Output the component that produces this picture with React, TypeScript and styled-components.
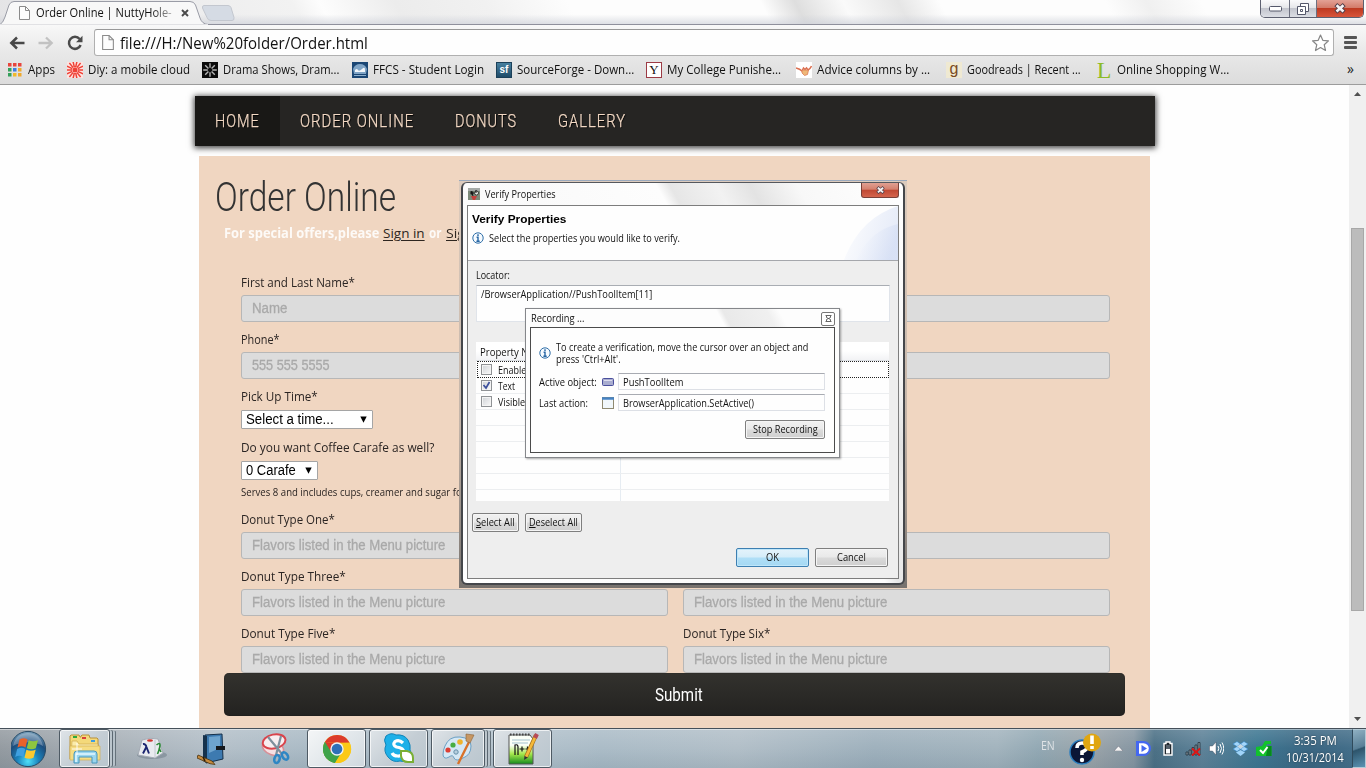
import React, { useLayoutEffect, useRef, useState } from "react";
import styled, { createGlobalStyle, css } from "styled-components";

const UI = `"Open Sans", "Noto Sans", sans-serif`;
const HEAD = `Roboto, "Open Sans", sans-serif`;

const Global = createGlobalStyle`
  * { box-sizing: border-box; }
  html, body { margin: 0; padding: 0; overflow: hidden; background: #fefefe; }
  svg { display: block; flex: none; }
`;

/* ---------- text fitted to a fixed advance width ---------- */
const FitBox = styled.span<{ $w: number }>`
  display: inline-block;
  width: ${(p) => p.$w}px;
  flex: none;
  white-space: pre;
  text-align: left;
  text-decoration: inherit;
`;
const FitInner = styled.span`
  display: inline-block;
  transform-origin: 0 50%;
  text-decoration: inherit;
`;
function Fit({ w, children }: { w: number; children: React.ReactNode }) {
  const ref = useRef<HTMLSpanElement>(null);
  const [scale, setScale] = useState(1);
  useLayoutEffect(() => {
    if (ref.current) setScale(w / ref.current.offsetWidth);
  }, [w]);
  return (
    <FitBox $w={w}>
      <FitInner ref={ref} style={{ transform: `scaleX(${scale})` }}>
        {children}
      </FitInner>
    </FitBox>
  );
}

/* ---------- browser chrome ---------- */
const Screen = styled.div`
  width: 1366px;
  height: 768px;
  display: flex;
  flex-direction: column;
  overflow: hidden;
  font-family: ${UI};
  color: #111;
`;
const TabStrip = styled.div`
  height: 24px;
  flex: none;
  display: flex;
  align-items: flex-start;
  justify-content: space-between;
  background:
    linear-gradient(180deg, rgba(255,255,255,0) 60%, rgba(205,208,216,.65) 100%),
    linear-gradient(62deg, #e4e4e6 0, #f2f2f2 22%, #fdfdfd 24%, #ececec 29.5%, #f1f1f1 36%, #fdfdfd 42%, #fdfdfd 56%, #dedede 58.5%, #fafafa 62%, #e6e6e6 66%, #fdfdfd 69%, #fdfdfd 81%, #f0f0f0 84%, #fdfdfd 88%);
`;
const Tabs = styled.div`
  display: flex;
  height: 24px;
`;
const Tab = styled.div`
  position: relative;
  width: 201px;
  height: 24px;
  display: flex;
  align-items: center;
  padding: 2px 0 0 19px;
  font-size: 12px;
`;
const TabShape = styled.svg`
  position: absolute;
  left: 0;
  top: 0;
`;
const TabTitle = styled.span`
  position: relative;
  margin: 0 9px 0 6px;
  line-height: 22px;
  -webkit-mask-image: linear-gradient(90deg, #000 85%, rgba(0, 0, 0, 0.3) 100%);
`;
const Above = styled.span`
  position: relative;
  display: block;
`;
const NewTab = styled.svg`
  margin-top: 4px;
`;
const WinControls = styled.div`
  display: flex;
  width: 104px;
  height: 18px;
  margin-right: 2px;
  border: 1px solid #5d6070;
  border-top: 0;
  border-radius: 0 0 5px 5px;
  overflow: hidden;
  box-shadow: 0 0 1px #fff;
`;
const WinBtn = styled.div<{ $w: number; $red?: boolean }>`
  width: ${(p) => p.$w}px;
  display: flex;
  align-items: center;
  justify-content: center;
  background: ${(p) =>
    p.$red
      ? "linear-gradient(180deg, #e3a195 0, #d37b6a 45%, #be3a22 50%, #d8553a 100%)"
      : "linear-gradient(180deg, #fafafb 0, #e6e7ea 45%, #c3c5cd 50%, #dcdee4 100%)"};
  & + & { border-left: 1px solid #6d7080; }
`;
const Toolbars = styled.div`
  height: 61px;
  flex: none;
  display: flex;
  flex-direction: column;
  border-top: 1px solid #8f909c;
  border-bottom: 1px solid #9c9c9c;
  background: linear-gradient(180deg, #f8f8f8 0, #e9e9e9 45%, #dcdcdc 100%);
`;
const AddressRow = styled.div`
  display: flex;
  flex: none;
  align-items: center;
  height: 34px;
  padding: 1px 0 0 9px;
`;
const NavIcons = styled.div`
  display: flex;
  width: 85px;
  gap: 13px;
  align-items: center;
`;
const Omnibox = styled.div`
  width: 1240px;
  height: 27px;
  display: flex;
  align-items: center;
  padding: 0 3px 0 7px;
  border: 1px solid #b0b0b0;
  border-top-color: #989898;
  border-radius: 3px;
  background: #fefefe;
  font-size: 15.5px;
  line-height: 24px;
`;
const Url = styled.div`
  flex: 1;
  margin-left: 6px;
`;
const MenuLines = styled.div`
  margin-left: 10px;
  width: 13px;
  display: grid;
  gap: 2px;
`;
const MenuLine = styled.i`
  height: 3px;
  border-radius: 1px;
  background: #555;
`;
const BookmarkRow = styled.div`
  display: flex;
  flex: none;
  height: 22px;
  padding-left: 8px;
  align-items: center;
  font-size: 12px;
  line-height: 19px;
`;
const Bookmark = styled.div<{ $w: number; $gap?: number }>`
  display: flex;
  align-items: center;
  gap: ${(p) => p.$gap ?? 5}px;
  width: ${(p) => p.$w}px;
  height: 22px;
  padding-bottom: 1px;
  & > ${FitBox} { margin-top: -1px; }
`;
const Chevron = styled.div`
  margin: -3px 0 0 101px;
  font-size: 14px;
  color: #222;
`;
const Favicon = styled.div<{ $bg: string; $c: string; $serif?: boolean; $b?: string; $s?: number; $lh?: number }>`
  width: 16px;
  height: 16px;
  flex: none;
  display: flex;
  align-items: flex-start;
  justify-content: center;
  background: ${(p) => p.$bg};
  color: ${(p) => p.$c};
  border: ${(p) => (p.$b ? `1px solid ${p.$b}` : "0")};
  font: ${(p) => `${p.$s ?? 13}px/${p.$lh ?? 14}px ${p.$serif ? '"Liberation Serif", serif' : '"Liberation Sans", sans-serif'}`};
`;

/* ---------- web page ---------- */
const Viewport = styled.div`
  height: 643px;
  flex: none;
  display: flex;
  background: #fefefe;
`;
const PageArea = styled.div`
  width: 1349px;
  height: 643px;
  padding: 11px 0 0 195px;
  overflow: hidden;
`;
const SiteNav = styled.nav`
  display: flex;
  width: 960px;
  height: 50px;
  background: #262523;
  box-shadow: 0 1px 6px 1px rgba(0, 0, 0, 0.75);
`;
const NavLink = styled.a<{ $w: number; $active?: boolean }>`
  width: ${(p) => p.$w}px;
  padding-left: 20px;
  color: #f3d9c4;
  background: ${(p) => (p.$active ? "#191816" : "transparent")};
  font: 300 18px/50px ${HEAD};
  -webkit-text-stroke: 0.25px #f3d9c4;
  letter-spacing: 1.2px;
  text-shadow: 1px 1px 1px #000;
`;
const Panel = styled.main`
  width: 951px;
  height: 572px;
  margin: 10px 0 0 4px;
  background: #f0d6c1;
`;
const Title = styled.h1`
  margin: 0;
  padding: 18px 0 0 16px;
  font: 300 40px/47px ${HEAD};
  color: #333;
  height: 64px;
`;
const Offers = styled.div`
  display: flex;
  gap: 4px;
  padding-left: 25px;
  height: 45px;
  font: 700 13.5px/26px "Open Sans", sans-serif;
  color: #fdfaf7;
`;
const OfferLink = styled.a`
  color: #2e2620;
  font-weight: 400;
  text-decoration: underline;
  text-underline-offset: 2px;
`;
const Columns = styled.div`
  display: grid;
  grid-template-columns: 427px 427px;
  column-gap: 15px;
  padding-left: 42px;
`;
const Field = styled.div<{ $h?: number }>`
  height: ${(p) => p.$h ?? 57}px;
  display: flex;
  flex-direction: column;
  justify-content: flex-end;
  align-items: flex-start;
`;
const Label = styled.label`
  font: 12px/24px "Open Sans", sans-serif;
  color: #2b2523;
  height: 24px;
`;
const Input = styled.div`
  width: 427px;
  height: 27px;
  padding-left: 10px;
  border: 1px solid #b7b7b7;
  border-radius: 3px;
  background: #dcdcdc;
  color: #a9a9a9;
  -webkit-text-stroke: 0.3px #a9a9a9;
  font: 400 14px/25px "Liberation Sans", sans-serif;
`;
const Select = styled.div<{ $w: number }>`
  width: ${(p) => p.$w}px;
  height: 19px;
  margin-top: 1px;
  padding: 0 5px 0 4px;
  display: flex;
  align-items: center;
  justify-content: space-between;
  border: 1px solid #a5a5a5;
  border-radius: 1px;
  background: #fff;
  color: #000;
  font: 14px/17px "Liberation Sans", sans-serif;
`;
const Note = styled.div`
  height: 22px;
  font: 10px/25px "Open Sans", sans-serif;
  color: #2b2523;
`;
const Submit = styled.div`
  display: flex;
  align-items: center;
  justify-content: center;
  width: 901px;
  height: 43px;
  margin-left: 25px;
  padding-left: 9px;
  border-radius: 5px;
  background: linear-gradient(180deg, #33322e 0, #232220 100%);
  box-shadow: inset 0 0 1px #111;
  color: #fff;
  font: 400 18px/43px ${HEAD};
`;
const ScrollBar = styled.div`
  width: 17px;
  height: 643px;
  background: #f0f0f0;
  display: flex;
  flex-direction: column;
  align-items: center;
  padding: 7px 0 7px;
`;
const Thumb = styled.div`
  width: 13px;
  height: 383px;
  margin: 132px 0 auto;
  background: #bcbcbc;
  border: 1px solid #a8a8a8;
`;

/* ---------- dialog windows ---------- */
const DialogShadow = styled.div`
  position: absolute;
  left: 459px;
  top: 180px;
  width: 448px;
  height: 408px;
  padding: 1px 2px 2px;
  border-top: 1px solid #9aa9bd;
  background: linear-gradient(180deg, #dccbbd 0, #c4b5a9 60%, #77726e 100%);
`;
const DialogFrame = styled.div`
  width: 444px;
  height: 403px;
  border: 2px solid #45474b;
  border-top: 1px solid #55585e;
  border-radius: 6px;
  padding: 0 4px;
  font-size: 10px;
  line-height: 14px;
  background: linear-gradient(60deg, #fff 0, #fafafa 44%, #fdfdfd 63%, #e6e6e6 65%, #f2f2f2 72%, #e3e3e3 77%, #f8f8f8 84%, #fff 100%);
`;
const DialogTitle = styled.div`
  display: flex;
  height: 22px;
  padding: 0 0 0 1px;
  align-items: center;
`;
const TitleText = styled.div`
  margin: -1px 0 0 5px;
  flex: 1;
`;
const CloseBtn = styled.div`
  align-self: flex-start;
  width: 38px;
  height: 15px;
  display: flex;
  align-items: center;
  justify-content: center;
  border: 1px solid #7a4038;
  border-top: 0;
  border-radius: 0 0 3px 3px;
  background: linear-gradient(180deg, #e0a092 0, #d4806e 45%, #c04833 50%, #d4644d 100%);
`;
const DialogBody = styled.div`
  width: 432px;
  height: 374px;
  border: 1px solid #7d7d7d;
  background: #eee;
`;
const DialogHeader = styled.div`
  position: relative;
  height: 55px;
  padding: 5px 0 0 4px;
  background: #fefefe;
  border-bottom: 1px solid #a5a7ac;
`;
const HeaderArt = styled.svg`
  position: absolute;
  right: 0;
  top: 0;
`;
const BoldLine = styled.div`
  font: 700 11.5px/16px "Liberation Sans", sans-serif;
  color: #000;
`;
const InfoRow = styled.div`
  display: flex;
  align-items: center;
  gap: 5px;
  margin-top: 3px;
  height: 16px;
`;
const LocatorLabel = styled.div`
  margin: 7px 0 3px 8px;
`;
const LocatorBox = styled.div`
  width: 414px;
  height: 37px;
  margin-left: 8px;
  padding: 1px 4px;
  border: 1px solid #e0e4ea;
  border-top-color: #a9adb3;
  background: #fefefe;
`;
const Table = styled.div`
  width: 413px;
  height: 159px;
  margin: 20px 0 0 8px;
  background: #fefefe;
  overflow: hidden;
`;
const TableHead = styled.div`
  height: 19px;
  padding: 3px 4px;
  background: linear-gradient(180deg, #fff 50%, #f2f3f5 100%);
  border-bottom: 1px solid #dcdfe3;
`;
const TableRow = styled.div<{ $focus?: boolean }>`
  display: grid;
  grid-template-columns: 145px 1fr;
  height: 16px;
  border-bottom: 1px solid #eceef0;
  ${(p) =>
    p.$focus &&
    css`
      height: 17px;
      border: 1px dotted #222;
      margin-left: 1px;
      & > div { padding-left: 3px; }
    `}
`;
const NameCell = styled.div<{ $line?: boolean }>`
  display: flex;
  align-items: center;
  gap: 6px;
  padding-left: 5px;
  border-right: 1px solid ${(p) => (p.$line ? "#e6ecf2" : "transparent")};
`;
const CheckBox = styled.div`
  width: 11px;
  height: 11px;
  flex: none;
  border: 1px solid #8f9295;
  background: linear-gradient(135deg, #cfd2d6, #fafafa);
  box-shadow: inset 0 0 0 1px #f4f4f4;
`;
const ButtonRow = styled.div<{ $end?: boolean }>`
  display: flex;
  gap: 6px;
  margin-top: ${(p) => (p.$end ? 16 : 12)}px;
  padding: ${(p) => (p.$end ? "0 10px 0 0" : "0 0 0 4px")};
  justify-content: ${(p) => (p.$end ? "flex-end" : "flex-start")};
`;
const Btn = styled.div<{ $w: number; $primary?: boolean }>`
  display: flex;
  align-items: center;
  justify-content: center;
  width: ${(p) => p.$w}px;
  height: 19px;
  padding-bottom: 1px;
  border: 1px solid ${(p) => (p.$primary ? "#3d7fb1" : "#7f7f7f")};
  border-radius: 2px;
  box-shadow: inset 0 0 0 1px ${(p) => (p.$primary ? "#bfe6fa" : "#f5f5f5")};
  background: ${(p) =>
    p.$primary
      ? "linear-gradient(180deg, #e4f3fb 0, #d5edf9 48%, #b0dff7 52%, #a4d8f3 100%)"
      : "linear-gradient(180deg, #f1f1f1 0, #e9e9e9 48%, #dadada 52%, #cfcfcf 100%)"};
`;
const Recorder = styled.div`
  position: absolute;
  left: 525px;
  top: 308px;
  width: 315px;
  height: 150px;
  border: 1px solid #85878b;
  padding: 0 4px;
  font-size: 10px;
  line-height: 14px;
  background: #fdfdfd;
  box-shadow: 1px 1px 2px rgba(0, 0, 0, 0.35);
`;
const RecorderTitle = styled.div`
  display: flex;
  align-items: center;
  justify-content: space-between;
  height: 18px;
  padding: 1px 0 0 1px;
  background: linear-gradient(62deg, #fdfdfd 0, #fdfdfd 62%, #e9e9e9 64%, #f0f0f0 78%, #fdfdfd 82%);
  & > ${FitBox} { margin-top: -2px; }
`;
const SmallClose = styled.div`
  width: 14px;
  height: 14px;
  display: flex;
  align-items: center;
  justify-content: center;
  border: 1px solid #777;
  border-radius: 2px;
  background: #fff;
`;
const RecorderBody = styled.div`
  height: 126px;
  padding: 13px 9px 0 8px;
  border: 1px solid #4b4b4b;
  background: #fefefe;
`;
const Hint = styled.div`
  display: flex;
  align-items: center;
  gap: 5px;
  height: 24px;
  line-height: 12px;
  margin-bottom: 8px;
`;
const FormLine = styled.div`
  display: flex;
  align-items: center;
  height: 17px;
  margin-bottom: 4px;
`;
const FormLabel = styled.div`
  width: 63px;
`;
const IconCell = styled.div`
  width: 16px;
`;
const ReadOnly = styled.div`
  width: 207px;
  height: 17px;
  padding-left: 4px;
  border: 1px solid #dde0e6;
  border-top-color: #a8abb2;
  line-height: 16px;
`;
const RecorderFoot = styled.div`
  display: flex;
  justify-content: flex-end;
  margin-top: 9px;
`;

/* ---------- taskbar ---------- */
const Taskbar = styled.div`
  height: 40px;
  flex: none;
  display: flex;
  justify-content: space-between;
  border-top: 1px solid #45505a;
  box-shadow: inset 0 1px 0 rgba(255,255,255,.45);
  background:
    linear-gradient(180deg, rgba(255,255,255,.14) 0, rgba(255,255,255,0) 50%, rgba(30,60,80,.1) 100%),
    linear-gradient(90deg, #949ba1 0, #a9b1b8 8%, #b4c0c9 16%, #a9bac5 24%, #b7c5cf 34%, #abbcc7 44%, #b2bfc8 54%, #9fb1bd 64%, #a3b4be 73%, #93a9b4 76%, #9ba4a9 80%, #8797a3 83%, #4c7186 84.5%, #5e8298 88%, #3e7792 92%, #3b6682 96%, #46718c 100%);
`;
const TaskGroup = styled.div`
  display: flex;
  height: 39px;
`;
const Pinned = styled.div<{ $w: number }>`
  width: ${(p) => p.$w}px;
  display: flex;
  align-items: center;
  justify-content: center;
`;
const TaskBtn = styled.div<{ $w: number; $mr: number; $stack?: boolean; $on?: boolean }>`
  width: ${(p) => p.$w}px;
  height: 39px;
  margin-right: ${(p) => p.$mr}px;
  display: flex;
  align-items: center;
  justify-content: center;
  border: 1px solid #4e5a64;
  border-radius: 3px;
  background: ${(p) =>
    p.$on
      ? "linear-gradient(135deg, #f4f6f7, #dfe5e9 60%, #cfd8de)"
      : "linear-gradient(135deg, #dfe4e8, #c4cdd4 55%, #b9c6ce)"};
  box-shadow: inset 0 0 0 1px rgba(255, 255, 255, 0.7)
    ${(p) => (p.$stack ? ", 3px 0 0 -1px #bcc6cd, 4px 0 0 -1px #5c6872, 7px 0 0 -2px #b6c1c9, 8px 0 0 -2px #66727b" : "")};
`;
const Tray = styled.div`
  display: flex;
  align-items: center;
  height: 39px;
  color: #fff;
  font-size: 12px;
`;
const Lang = styled.div`
  width: 28px;
  color: #dfe3e6;
  line-height: 34px;
  height: 39px;
`;
const TrayIcon = styled.div<{ $w: number }>`
  width: ${(p) => p.$w}px;
  display: flex;
  justify-content: center;
`;
const Clock = styled.div`
  width: 74px;
  display: flex;
  flex-direction: column;
  align-items: center;
  line-height: 17px;
  padding-top: 1px;
  text-shadow: 0 0 2px rgba(0, 0, 0, 0.5);
`;
const ShowDesktop = styled.div`
  width: 14px;
  height: 39px;
  border: 1px solid #b3cad6;
  border-left-color: #2f4a5b;
  background: linear-gradient(160deg, #8fb0c2 0, #587f97 48%, #2d546b 52%, #5a93b3 100%);
`;

/* ---------- drawings ---------- */
const DocIcon = ({ w = 11, h = 14 }) => (
  <svg width={w} height={h} viewBox="0 0 11 14" fill="#fdfdfd" stroke="#8b8b8b">
    <path d="M.5.5h6l4 4v9H.5z" />
    <path d="M6.5.5v4h4" fill="none" />
  </svg>
);
const WinX = ({ s = 11 }) => (
  <svg width={s} height={s * 0.9} viewBox="0 0 11 10">
    <path d="M1.600 1.500 9.400 8.500 M9.400 1.500 1.600 8.500" stroke="#54404a" strokeWidth="4" />
    <path d="M2.300 2.100 8.700 7.900 M8.700 2.100 2.300 7.900" stroke="#f6f3f4" strokeWidth="2.400" />
  </svg>
);
const Info = () => (
  <svg width="12" height="12" viewBox="0 0 12 12">
    <circle cx="6" cy="6" r="5.2" fill="#f6fbff" stroke="#2f6ea8" />
    <path d="M6 2.3v1.6M4.6 5.2H6v4M4.4 9.2h3.3" stroke="#2464a4" strokeWidth="1.4" fill="none" />
  </svg>
);
const Caret = () => (
  <svg width="7" height="7" viewBox="0 0 7 7"><path d="M.3.500h6.400L3.500 6.800z" fill="#000" /></svg>
);
const rays = (n: number, r0: number, r1: number) =>
  Array.from({ length: n }, (_, i) => {
    const a = (i * 2 * Math.PI) / n;
    return `M${8 + r0 * Math.cos(a)} ${8 + r0 * Math.sin(a)}L${8 + r1 * Math.cos(a)} ${8 + r1 * Math.sin(a)}`;
  }).join("");
const Orb = () => (
  <svg width="38" height="38" viewBox="0 0 38 38">
    <defs>
      <radialGradient id="orb" cx=".5" cy=".85" r=".85">
        <stop offset="0" stopColor="#4fe0f8" /><stop offset=".35" stopColor="#1b84bd" />
        <stop offset=".7" stopColor="#1c4c7c" /><stop offset="1" stopColor="#7fa6c0" />
      </radialGradient>
    </defs>
    <circle cx="17" cy="19" r="17.6" fill="url(#orb)" stroke="#284b66" />
    <g transform="translate(-2 0)">
      <path d="M4 16C6 6 13 3 19 3s13 3 15 13c-9-5-21-5-30 0z" fill="#fff" opacity=".28" />
      <path d="M10.500 9.500c3-1.600 5.500-1.500 8 0l-2 8c-2.600-1.500-5-1.600-8 0z" fill="#e9622b" />
      <path d="M19.700 10.200c3 1.500 6 1.500 9.300 0l-2.200 8c-3 1.500-6 1.300-9 0z" fill="#8ec640" />
      <path d="M8.200 19c3-1.600 5.500-1.500 8 0l-2 8c-2.600-1.500-5-1.600-8 0z" fill="#3fa0e0" />
      <path d="M17.400 19.700c3 1.500 6 1.500 9.300 0l-2.200 8c-3 1.500-6 1.300-9 0z" fill="#fcc92f" />
    </g>
  </svg>
);
const Explorer = () => (
  <svg width="34" height="32" viewBox="0 0 34 32">
    <path d="M2 6V3l1-1h8l1 2h1V3l1-1h7l1 3h7l1 1v4l1 16H2z" fill="#f4d97a" stroke="#b9923a" />
    <path d="M4 8h5l2 3h19v15H3z" fill="#fbecaa" stroke="#d0aa4e" strokeWidth=".7" />
    <path d="M2 13h30v14H2z" fill="#f6dd83" stroke="#d3b055" strokeWidth=".7" />
    <path d="M5 3h4v2H5z" fill="#2daa3c" /><path d="M14 4h4v2h-4z" fill="#d8403a" /><path d="M23 7h4v2h-4z" fill="#3d9de0" />
    <path d="M6 30v-9q0-3 3-3h17q3 0 3 3v9h-5v-6H11v6z" fill="#9bd6ee" stroke="#4796bd" />
    <path d="M8 29v-8h19" stroke="#e3f7ff" strokeWidth="1.500" fill="none" />
    <path d="M9 10v12M4 16h10" stroke="#fff" strokeWidth=".9" />
  </svg>
);
const LambdaCube = () => (
  <svg width="32" height="24" viewBox="0 0 32 24">
    <ellipse cx="17" cy="18" rx="15" ry="4" fill="#6b7a86" opacity=".5" />
    <path d="M7 3q8-3 16-1l5 14-8 5L3 18z" fill="#e9ebef" stroke="#a5abb5" />
    <path d="M20 3v18" stroke="#c3c8d0" /><ellipse cx="15" cy="3.500" rx="3" ry="1.300" fill="#d0352e" />
    <path d="M8 7q2.500-.5 3.500 3l2.500 6.500M11.300 10 8 16.500" stroke="#1c2570" strokeWidth="1.900" fill="none" />
    <path d="M21.500 8q3.500-3 3.500 0 0 3-2.500 9M24 11l2 4" stroke="#2a8a35" strokeWidth="1.600" fill="none" />
  </svg>
);
const Book = () => (
  <svg width="32" height="34" viewBox="0 0 32 34">
    <path d="M8 3 25 2l1 25-17 4z" fill="#3d7ab0" stroke="#152f49" />
    <path d="M6 3l4 1v27l-4-2z" fill="#16324c" /><path d="M12 5l11-1v12l-11 5z" fill="#8fbfe2" opacity=".6" />
    <path d="M19 14h9v4h-9z" fill="#15181c" />
    <path d="M1 23l14 6 3 3.500-5-.8L0 26z" fill="#c58a3d" stroke="#47310f" strokeWidth=".8" />
    <path d="M6 25l2 4" stroke="#2a1c08" strokeWidth="1.500" />
  </svg>
);
const Snip = () => (
  <svg width="32" height="32" viewBox="0 0 32 32">
    <ellipse cx="13" cy="15" rx="11" ry="7" fill="#f6dfe2" stroke="#d78f97" strokeWidth="1.500" transform="rotate(20 13 15)" />
    <ellipse cx="14" cy="8.500" rx="11.500" ry="7" fill="#f8eef0" stroke="#d9444c" strokeWidth="2" transform="rotate(-12 14 8)" />
    <path d="M8 4l14 17M21 3l-5 19" stroke="#7e8f9c" strokeWidth="2.200" />
    <ellipse cx="17" cy="26" rx="2.600" ry="4" fill="none" stroke="#2e86c4" strokeWidth="2.600" transform="rotate(15 17 26)" />
    <ellipse cx="25" cy="23" rx="2.600" ry="4" fill="none" stroke="#2e86c4" strokeWidth="2.600" transform="rotate(-35 25 23)" />
  </svg>
);
const ChromeLogo = () => (
  <svg width="30" height="30" viewBox="0 0 30 30">
    <circle cx="15" cy="15" r="14" fill="#fbc916" />
    <path d="M15 15 2.900 8A14 14 0 0 0 13 28.900L20 18z" fill="#3fa34a" />
    <path d="M2.900 8A14 14 0 0 1 27.600 8.800H15z" fill="#dc3b2b" />
    <path d="M27.600 8.800A14 14 0 0 1 13 28.900l7-11-5-9z" fill="#fbc916" />
    <path d="M2.900 8 9 18l6-9.200z" fill="#dc3b2b" />
    <path d="M2.900 8 9.500 19l5 1-1.500 8.900A14 14 0 0 1 2.900 8z" fill="#3fa34a" />
    <circle cx="15" cy="15" r="6.700" fill="#eef1f4" /><circle cx="15" cy="15" r="5.300" fill="#2e70b8" />
  </svg>
);
const SkypeLogo = () => (
  <svg width="32" height="32" viewBox="0 0 32 32">
    <path d="M3 3q5-4 10-1 8-1 12 5 3 5 2 10 3 5-1 9t-9 2Q10 30 5 24T3 12Q0 7 3 3z" fill="#1eb0e8" stroke="#1284b8" />
    <path d="M20 10q-4-4-8-1.500-3 3.500 1.500 5.500 7 1 7 4.500-1 5-6 4.500-4 0-5.500-3" stroke="#fff" strokeWidth="3.200" fill="none" />
    <path d="M18 18h6q6 1 6 7v4h-5q-6 0-7-6z" fill="#fff" stroke="#7aaf35" strokeWidth="2" />
  </svg>
);
const PaintLogo = () => (
  <svg width="34" height="34" viewBox="0 0 34 34">
    <path d="M4 14Q8 4 19 5q11 1 11 9 0 9-8 12-7 4-9 0-1-4-5-1-5 3-6-2 0-5 2-9z" fill="#d5e8f5" stroke="#6ba0c4" />
    <circle cx="7" cy="18" r="2.600" fill="#dd3f34" /><circle cx="12" cy="13" r="2.600" fill="#48ad41" /><circle cx="19" cy="10" r="2.800" fill="#f0b32c" />
    <circle cx="15" cy="20" r="2.200" fill="#b7cfdf" stroke="#6790aa" />
    <path d="M28 10 17 32" stroke="#d8722a" strokeWidth="2.400" /><path d="M25 2l8 1-4 8-4-2z" fill="#c79763" stroke="#8b6237" strokeWidth=".6" />
  </svg>
);
const NotepadLogo = () => (
  <svg width="32" height="34" viewBox="0 0 32 34">
    <defs><linearGradient id="np" x1="0" y1="0" x2="0" y2="1"><stop offset=".35" stopColor="#fbfff8" /><stop offset=".65" stopColor="#a6e84c" /><stop offset="1" stopColor="#148a1d" /></linearGradient></defs>
    <path d="M2 3h21l3 4v25H2z" fill="url(#np)" stroke="#555" />
    <path d="M3 2.500h20" stroke="#444" strokeWidth="2" strokeDasharray="1.500 1.500" />
    <path d="M5 8h18M5 11h16" stroke="#a5c3d0" />
    <path d="M8 23v-10q3-1 3 2v8M12.500 17h5M15 14.500v5M18.500 17h4M20.500 14.500v5" stroke="#111" strokeWidth="1.200" fill="none" />
    <path d="M29 3 19 25" stroke="#a36d1b" strokeWidth="4.200" /><path d="M28.700 4 19 25" stroke="#f4b93a" strokeWidth="2.800" /><path d="M28 6l2-4" stroke="#b84a58" strokeWidth="4" /><path d="M17.500 24l-.5 4 4-2.500z" fill="#333" />
  </svg>
);

const Flavor = () => (
  <Input><Fit w={193}>Flavors listed in the Menu picture</Fit></Input>
);

export default function App() {
  return (
    <Screen>
      <Global />
      <TabStrip>
        <Tabs>
          <Tab>
            <TabShape width="210" height="25" viewBox="0 0 210 25">
              <path d="M0 24.500 Q3 23 5 17 L9 5 Q10.500 1.500 14 1.500 H190 Q194 1.500 195.500 5 L200 18 Q202 24 208 24.500z" fill="#f8f8f8" stroke="#9a9ca6" />
              <path d="M0 25H208" stroke="#f8f8f8" strokeWidth="1.500" />
            </TabShape>
            <Above><DocIcon /></Above>
            <TabTitle><Fit w={136}>Order Online | NuttyHole-</Fit></TabTitle>
            <Above>
              <svg width="8" height="8" viewBox="0 0 8 8"><path d="M1 1l6 6M7 1 1 7" stroke="#4a4a4a" strokeWidth="1.900" /></svg>
            </Above>
          </Tab>
          <NewTab width="35" height="18" viewBox="0 0 35 18">
            <path d="M3 1.500h24q2 0 3 2l3 10q.5 3-2 3H10q-3 0-4-3L1.500 4Q1 1.500 3 1.500z" fill="#d5dbe4" stroke="#c3c7cf" />
          </NewTab>
        </Tabs>
        <WinControls>
          <WinBtn $w={28}>
            <svg width="13" height="6" viewBox="0 0 13 6"><rect x=".5" y=".5" width="12" height="4.500" rx="1" fill="#fff" stroke="#55586b" /></svg>
          </WinBtn>
          <WinBtn $w={27}>
            <svg width="12" height="12" viewBox="0 0 12 12" fill="#fff" stroke="#55586b"><path d="M3.500.5h8v8h-8z" /><path d="M.5 3.500h8v8h-8z" /><path d="M3.500 6.500h2v2h-2z" /></svg>
          </WinBtn>
          <WinBtn $w={47} $red><WinX s={12} /></WinBtn>
        </WinControls>
      </TabStrip>

      <Toolbars>
        <AddressRow>
          <NavIcons>
            <svg width="16" height="14" viewBox="0 0 16 14"><path d="M15.500 7H3M8 1.500 2.300 7 8 12.500" fill="none" stroke="#484848" strokeWidth="2.500" /></svg>
            <svg width="16" height="14" viewBox="0 0 16 14"><path d="M.5 7H13M8 1.500 13.700 7 8 12.500" fill="none" stroke="#c2c2c2" strokeWidth="2.300" /></svg>
            <svg width="16" height="16" viewBox="0 0 16 16"><path d="M12.600 4A6 6 0 1 0 13.600 10" fill="none" stroke="#4a4a4a" strokeWidth="2.500" /><path d="M15.500.8v6.400H9z" fill="#4a4a4a" /></svg>
          </NavIcons>
          <Omnibox>
            <DocIcon w={12} h={15} />
            <Url><Fit w={248}>file:///H:/New%20folder/Order.html</Fit></Url>
            <svg width="19" height="18" viewBox="0 0 18 18"><path d="M9 1l2.300 5.300 5.700.5-4.300 3.900L14 16.500 9 13.500 4 16.500l1.300-5.800L1 6.800l5.700-.5z" fill="#fff" stroke="#878787" strokeWidth="1.200" strokeLinejoin="round" /></svg>
          </Omnibox>
          <MenuLines><MenuLine /><MenuLine /><MenuLine /></MenuLines>
        </AddressRow>
        <BookmarkRow>
          <Bookmark $w={59} $gap={6}>
            <svg width="14" height="14" viewBox="0 0 14 14">
              {["#e8453c", "#e8453c", "#e8453c", "#34a05a", "#3d7de0", "#f0a92c", "#34a05a", "#f0b92c", "#f0a92c"].map((c, i) => (
                <rect key={i} x={(i % 3) * 5} y={Math.floor(i / 3) * 5} width="3.500" height="3.500" fill={c} />
              ))}
            </svg>
            <Fit w={27}>Apps</Fit>
          </Bookmark>
          <Bookmark $w={135}>
            <svg width="16" height="16" viewBox="0 0 16 16"><rect width="16" height="16" fill="#fde3e0" /><path d={rays(14, 3, 9)} stroke="#ef4136" strokeWidth="1.500" /><circle cx="8" cy="8" r="2.500" fill="#ef4136" /></svg>
            <Fit w={102}>Diy: a mobile cloud</Fit>
          </Bookmark>
          <Bookmark $w={150}>
            <svg width="16" height="16" viewBox="0 0 16 16"><rect width="16" height="16" fill="#0b0b0b" /><path d={rays(8, 2.2, 6.8)} stroke="#b5b5b5" strokeWidth="1.400" /></svg>
            <Fit w={116}>Drama Shows, Dram...</Fit>
          </Bookmark>
          <Bookmark $w={144}>
            <svg width="16" height="16" viewBox="0 0 16 16"><rect width="16" height="16" fill="#1a4674" /><path d="M1 7q2-5 7-5t7 5l-1 5H2z" fill="#7fa4c6" /><path d="M3 8q2-2 3 0t4-1 3 1v2H3z" fill="#f2f6fa" /><path d="M2 13.500h12" stroke="#8fb0cd" /></svg>
            <Fit w={111}>FFCS - Student Login</Fit>
          </Bookmark>
          <Bookmark $w={150}>
            <Favicon $bg="linear-gradient(#47809f,#1f4b68)" $c="#fff" $b="#1b4059" $s={10} $lh={13}><b>sf</b></Favicon>
            <Fit w={117}>SourceForge - Down...</Fit>
          </Bookmark>
          <Bookmark $w={150}>
            <Favicon $bg="#fff" $c="#111" $b="#9c3b45" $serif $s={13}>Y</Favicon>
            <Fit w={114}>My College Punishe...</Fit>
          </Bookmark>
          <Bookmark $w={150}>
            <svg width="16" height="16" viewBox="0 0 16 16"><rect width="16" height="16" fill="#fff" /><path d="M0 6q4 1 6 3l1.500-3 1.500 1.500L10.500 6 12 8q2-1 3.500-4" fill="none" stroke="#dc6f50" strokeWidth="1.500" /><path d="M6 8h6.500l-1 4.500-3 1L6 11z" fill="#efb777" stroke="#dc7b55" strokeWidth=".8" /></svg>
            <Fit w={113}>Advice columns by ...</Fit>
          </Bookmark>
          <Bookmark $w={150}>
            <Favicon $bg="#efe9d2" $c="#7a4b22" $s={16} $lh={13}>g</Favicon>
            <Fit w={114}>Goodreads | Recent ...</Fit>
          </Bookmark>
          <Bookmark $w={150}>
            <Favicon $bg="transparent" $c="#8dbb25" $serif $s={24} $lh={16}>L</Favicon>
            <Fit w={112}>Online Shopping W...</Fit>
          </Bookmark>
          <Chevron>»</Chevron>
        </BookmarkRow>
      </Toolbars>

      <Viewport>
        <PageArea>
          <SiteNav>
            <NavLink $w={85} $active><Fit w={45}>HOME</Fit></NavLink>
            <NavLink $w={155}><Fit w={114}>ORDER ONLINE</Fit></NavLink>
            <NavLink $w={103}><Fit w={62}>DONUTS</Fit></NavLink>
            <NavLink $w={110}><Fit w={68}>GALLERY</Fit></NavLink>
          </SiteNav>
          <Panel>
            <Title><Fit w={181}>Order Online</Fit></Title>
            <Offers>
              <Fit w={155}>For special offers,please</Fit>
              <OfferLink><Fit w={42}>Sign in</Fit></OfferLink>
              <Fit w={13}>or</Fit>
              <OfferLink><Fit w={48}>Sign up</Fit></OfferLink>
            </Offers>
            <Columns>
              <Field><Label><Fit w={114}>First and Last Name*</Fit></Label><Input><Fit w={35}>Name</Fit></Input></Field>
              <Field><Input /></Field>
              <Field><Label><Fit w={39}>Phone*</Fit></Label><Input><Fit w={78}>555 555 5555</Fit></Input></Field>
              <Field><Input /></Field>
              <Field $h={50}><Label><Fit w={77}>Pick Up Time*</Fit></Label><Select $w={132}><Fit w={88}>Select a time...</Fit><Caret /></Select></Field>
              <div />
              <Field $h={51}><Label><Fit w={193}>Do you want Coffee Carafe as well?</Fit></Label><Select $w={77}><Fit w={50}>0 Carafe</Fit><Caret /></Select></Field>
              <div />
              <Note><Fit w={237}>Serves 8 and includes cups, creamer and sugar for all</Fit></Note>
              <div />
              <Field><Label><Fit w={94}>Donut Type One*</Fit></Label><Flavor /></Field>
              <Field><Input /></Field>
              <Field><Label><Fit w={105}>Donut Type Three*</Fit></Label><Flavor /></Field>
              <Field><Flavor /></Field>
              <Field><Label><Fit w={94}>Donut Type Five*</Fit></Label><Flavor /></Field>
              <Field><Label><Fit w={87}>Donut Type Six*</Fit></Label><Flavor /></Field>
            </Columns>
            <Submit><Fit w={48}>Submit</Fit></Submit>
          </Panel>
        </PageArea>
        <ScrollBar>
          <svg width="7" height="4" viewBox="0 0 7 4"><path d="M0 4 3.500 0 7 4z" fill="#505050" /></svg>
          <Thumb />
          <svg width="7" height="4" viewBox="0 0 7 4"><path d="M0 0h7L3.500 4z" fill="#505050" /></svg>
        </ScrollBar>
      </Viewport>

      <Taskbar>
        <TaskGroup>
          <Pinned $w={59}><Orb /></Pinned>
          <TaskBtn $w={51} $mr={9} $stack><Explorer /></TaskBtn>
          <Pinned $w={63}><LambdaCube /></Pinned>
          <Pinned $w={62}><Book /></Pinned>
          <Pinned $w={63}><Snip /></Pinned>
          <TaskBtn $w={59} $mr={3} $on><ChromeLogo /></TaskBtn>
          <TaskBtn $w={59} $mr={3}><SkypeLogo /></TaskBtn>
          <TaskBtn $w={54} $mr={8} $stack><PaintLogo /></TaskBtn>
          <TaskBtn $w={59} $mr={0}><NotepadLogo /></TaskBtn>
        </TaskGroup>
        <Tray>
          <Lang><Fit w={14}>EN</Fit></Lang>
          <svg width="32" height="32" viewBox="0 0 32 32">
            <circle cx="13" cy="19" r="12" fill="#0b1636" stroke="#2b7fc0" strokeWidth="1.500" />
            <path d="M8 15q0-5 5-5t5 4q0 3-5 5v3" stroke="#fff" strokeWidth="3.600" fill="none" /><circle cx="13" cy="27" r="2.200" fill="#fff" />
            <circle cx="23" cy="9.500" r="9" fill="#e0a611" /><path d="M23 2.500v8.500M23 13v3" stroke="#fff" strokeWidth="3.600" />
          </svg>
          <TrayIcon $w={35}><svg width="9" height="5" viewBox="0 0 9 5"><path d="M0 5 4.500 0 9 5z" fill="#f4f4f4" stroke="#556" strokeWidth=".4" /></svg></TrayIcon>
          <TrayIcon $w={15}><svg width="15" height="15" viewBox="0 0 15 15"><path d="M0 0h7.500a7.500 7.500 0 0 1 0 15H0z" fill="#4468f0" /><path d="M3 2.200h4.500a5.300 5.300 0 0 1 0 10.600H3z" fill="#fff" /><path d="M5.500 4 11 7.500 5.500 11z" fill="#4468f0" /></svg></TrayIcon>
          <TrayIcon $w={34}><svg width="10" height="15" viewBox="0 0 10 15"><path d="M3 1h4v1.500h2V14H1V2.500h2z" fill="#20282e" stroke="#fff" strokeWidth="1.400" /><rect x="3" y="8" width="4" height="4.500" fill="#fff" /><rect x="3" y="4" width="4" height="4" fill="#55606a" /></svg></TrayIcon>
          <TrayIcon $w={16}><svg width="16" height="14" viewBox="0 0 16 14"><path d="M1 13v-3h2v3zM4 13V8h2v5zM7 13V5.500h2V13zM10 13V3h2v10zM13 13V.5h2V13z" fill="#8b98a1" stroke="#24343e" strokeWidth=".8" /><path d="M7 6.500l8 7M15 6.500l-8 7" stroke="#e01414" strokeWidth="1.800" /></svg></TrayIcon>
          <TrayIcon $w={30}><svg width="15" height="15" viewBox="0 0 15 15"><path d="M.5 5h3L7 1v13L3.500 10h-3z" fill="#fff" stroke="#445" strokeWidth=".4" /><path d="M9 5q1.500 2.500 0 5M11 3q3 4.500 0 9M13 1.500q3.500 6 0 12" stroke="#fff" fill="none" /></svg></TrayIcon>
          <TrayIcon $w={19}><svg width="15" height="15" viewBox="0 0 15 15"><path d="M4 .5 7.500 3 4 5.500 0 3zM11 .5 15 3 11 5.500 7.500 3zM4 5.500 7.500 8 4 10.500 0 8zM11 5.500 15 8 11 10.500 7.500 8z" fill="#a3d6fa" stroke="#2e86ce" strokeWidth=".5" /><path d="M7.500 9 12 11.500 7.500 15 3 11.500z" fill="#9fd5fa" /><path d="M4 5.500 7.500 3 11 5.500 7.500 8z" fill="#fff" opacity=".7" /></svg></TrayIcon>
          <TrayIcon $w={28}><svg width="16" height="15" viewBox="0 0 16 15"><path d="M0 6 6 5 9 0h6v3h-4l-1 2h5.500v10H0z" fill="#12c22c" /><path d="M12 5h3.500v10H10z" fill="#078a1a" /><path d="M4 9l3 3 4.500-6" stroke="#fff" strokeWidth="2" fill="none" /></svg></TrayIcon>
          <Clock><Fit w={43}>3:35 PM</Fit><Fit w={58}>10/31/2014</Fit></Clock>
          <ShowDesktop />
        </Tray>
      </Taskbar>

      <DialogShadow>
        <DialogFrame>
          <DialogTitle>
            <svg width="12" height="12" viewBox="0 0 12 12"><rect width="12" height="12" fill="#7d8b7a" /><path d="M0 0h12v3H0z" fill="#a5aaa7" /><circle cx="4" cy="5" r="1.800" fill="#222" /><circle cx="8.500" cy="5" r="2" fill="#e8ece6" stroke="#222" strokeWidth=".8" /><path d="M3 8h6l-2 4H5z" fill="#c7403c" /><path d="M3 3l2 5M8 2v3" stroke="#111" /></svg>
            <TitleText><Fit w={71}>Verify Properties</Fit></TitleText>
            <CloseBtn><WinX s={9} /></CloseBtn>
          </DialogTitle>
          <DialogBody>
            <DialogHeader>
              <HeaderArt width="60" height="54" viewBox="0 0 60 54">
                <defs><linearGradient id="ha" x1="0" y1="0" x2="1" y2=".3"><stop offset="0" stopColor="#fff" /><stop offset="1" stopColor="#cfdaf3" /></linearGradient></defs>
                <path d="M60 0Q22 12 6 54H60z" fill="url(#ha)" opacity=".5" /><path d="M60 18Q32 24 18 54H60z" fill="url(#ha)" opacity=".6" />
              </HeaderArt>
              <BoldLine><Fit w={94}>Verify Properties</Fit></BoldLine>
              <InfoRow><Info /><Fit w={191}>Select the properties you would like to verify.</Fit></InfoRow>
            </DialogHeader>
            <LocatorLabel><Fit w={34}>Locator:</Fit></LocatorLabel>
            <LocatorBox><Fit w={171}>/BrowserApplication//PushToolItem[11]</Fit></LocatorBox>
            <Table>
              <TableHead><Fit w={68}>Property Name</Fit></TableHead>
              <TableRow $focus><NameCell><CheckBox /><Fit w={34}>Enabled</Fit></NameCell></TableRow>
              <TableRow>
                <NameCell>
                  <CheckBox><svg width="9" height="9" viewBox="0 0 9 9"><path d="M1.500 4 4 7 7.500 1" stroke="#3c4f9c" strokeWidth="1.700" fill="none" /></svg></CheckBox>
                  <Fit w={17}>Text</Fit>
                </NameCell>
              </TableRow>
              <TableRow><NameCell><CheckBox /><Fit w={27}>Visible</Fit></NameCell></TableRow>
              {[0, 1, 2, 3, 4, 5].map((i) => (
                <TableRow key={i}><NameCell $line /></TableRow>
              ))}
            </Table>
            <ButtonRow>
              <Btn $w={47}><Fit w={39}><u>S</u>elect All</Fit></Btn>
              <Btn $w={57}><Fit w={49}><u>D</u>eselect All</Fit></Btn>
            </ButtonRow>
            <ButtonRow $end>
              <Btn $w={73} $primary><Fit w={13}>OK</Fit></Btn>
              <Btn $w={73}><Fit w={29}>Cancel</Fit></Btn>
            </ButtonRow>
          </DialogBody>
        </DialogFrame>
      </DialogShadow>

      <Recorder>
        <RecorderTitle>
          <Fit w={53}>Recording ...</Fit>
          <SmallClose><svg width="7" height="7" viewBox="0 0 7 7"><path d="M.5.500h6M.5 6.500h6M1.500 1v1.500l4 2V6M5.500 1v1.500l-4 2V6" stroke="#555" strokeWidth=".9" fill="none" /></svg></SmallClose>
        </RecorderTitle>
        <RecorderBody>
          <Hint>
            <Info />
            <div><Fit w={252}>To create a verification, move the cursor over an object and</Fit><br /><Fit w={65}>press 'Ctrl+Alt'.</Fit></div>
          </Hint>
          <FormLine>
            <FormLabel><Fit w={58}>Active object:</Fit></FormLabel>
            <IconCell><svg width="12" height="8" viewBox="0 0 12 8"><rect x=".5" y=".5" width="11" height="7" rx="1" fill="#a9add0" stroke="#4a4f9c" /><path d="M2 2.500h8" stroke="#dde" /></svg></IconCell>
            <ReadOnly><Fit w={60}>PushToolItem</Fit></ReadOnly>
          </FormLine>
          <FormLine>
            <FormLabel><Fit w={49}>Last action:</Fit></FormLabel>
            <IconCell><svg width="12" height="12" viewBox="0 0 12 12"><rect x=".5" y=".5" width="11" height="11" fill="#f1f7fb" stroke="#8f8a72" /><path d="M0 1.500h12" stroke="#4683c4" strokeWidth="2.500" /></svg></IconCell>
            <ReadOnly><Fit w={131}>BrowserApplication.SetActive()</Fit></ReadOnly>
          </FormLine>
          <RecorderFoot><Btn $w={80}><Fit w={65}>Stop Recording</Fit></Btn></RecorderFoot>
        </RecorderBody>
      </Recorder>
    </Screen>
  );
}
